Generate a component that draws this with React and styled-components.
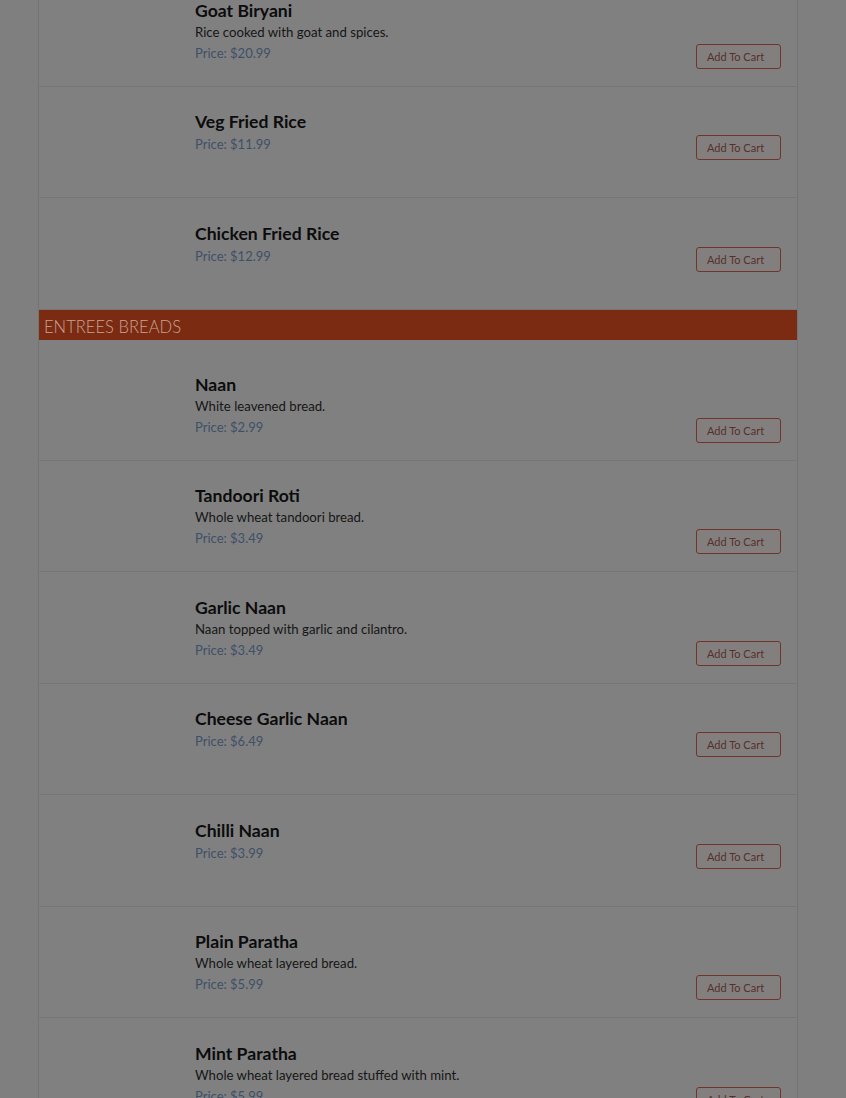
import React from "react";
import styled, { createGlobalStyle } from "styled-components";

const GlobalStyle = createGlobalStyle`
  html, body {
    margin: 0;
    padding: 0;
    background: #7f7f7f;
    overflow: hidden;
  }
  body {
    font-family: Lato, "Liberation Sans", sans-serif;
  }
`;

const sections = [
  {
    name: null,
    items: [
      { name: "Goat Biryani", desc: "Rice cooked with goat and spices.", price: "20.99" },
      { name: "Veg Fried Rice", price: "11.99" },
      { name: "Chicken Fried Rice", price: "12.99" },
    ],
  },
  {
    name: "ENTREES BREADS",
    items: [
      { name: "Naan", desc: "White leavened bread.", price: "2.99" },
      { name: "Tandoori Roti", desc: "Whole wheat tandoori bread.", price: "3.49" },
      { name: "Garlic Naan", desc: "Naan topped with garlic and cilantro.", price: "3.49" },
      { name: "Cheese Garlic Naan", price: "6.49" },
      { name: "Chilli Naan", price: "3.99" },
      { name: "Plain Paratha", desc: "Whole wheat layered bread.", price: "5.99" },
      { name: "Mint Paratha", desc: "Whole wheat layered bread stuffed with mint.", price: "5.99" },
    ],
  },
];

const App = () => {
  return (
    <>
      <GlobalStyle />
      <Menu>
        {sections.map((s, i) => (
          <Section key={i}>
            {s.name && <SectionHeader>{s.name}</SectionHeader>}
            <ItemList first={!s.name}>
              {s.items.map((item) => (
                <Item key={item.name}>
                  <Thumb />
                  <Body>
                    <Info>
                      <Title>{item.name}</Title>
                      {item.desc && <Desc>{item.desc}</Desc>}
                      <Price>Price: ${item.price}</Price>
                    </Info>
                    <CartButton>Add To Cart</CartButton>
                  </Body>
                </Item>
              ))}
            </ItemList>
          </Section>
        ))}
      </Menu>
    </>
  );
};

const Menu = styled.div`
  width: 760px;
  margin: -25px 0 0 38px;
  box-sizing: border-box;
  border-left: 1px solid #747474;
  border-right: 1px solid #747474;
  background: #808080;
`;

const Section = styled.div``;

const SectionHeader = styled.div`
  height: 30px;
  line-height: 34px;
  padding-left: 5px;
  background: #7b2b12;
  color: #c9a293;
  font-size: 16.6px;
  font-weight: 300;
`;

const ItemList = styled.div`
  padding-top: ${(p) => (p.first ? "0" : "9.5px")};
`;

const Item = styled.div`
  display: flex;
  height: 111.5px;
  box-sizing: border-box;
  padding: 24.5px 16px 0 0;
  border-bottom: 1px solid #767676;
`;

const Thumb = styled.div`
  width: 156px;
  flex-shrink: 0;
`;

const Body = styled.div`
  flex: 1;
  display: flex;
  align-items: flex-end;
  justify-content: space-between;
  align-self: flex-start;
`;

const Info = styled.div`
  display: flex;
  flex-direction: column;
`;

const Title = styled.div`
  font-size: 17.6px;
  font-weight: 700;
  line-height: 22px;
  color: #0c0c0c;
`;

const Desc = styled.div`
  font-size: 13.2px;
  line-height: 20px;
  color: #161616;
`;

const Price = styled.div`
  margin-top: 1px;
  font-size: 13px;
  line-height: 20px;
  color: #3e5068;
`;

const CartButton = styled.button`
  width: 85px;
  height: 25px;
  margin-bottom: -6px;
  padding: 0 0 0 10px;
  text-align: left;
  box-sizing: border-box;
  border: 1px solid #70342a;
  border-radius: 3px;
  background: #837f7f;
  color: #55302a;
  font-family: Lato, "Liberation Sans", sans-serif;
  font-size: 11px;
`;

export default App;
